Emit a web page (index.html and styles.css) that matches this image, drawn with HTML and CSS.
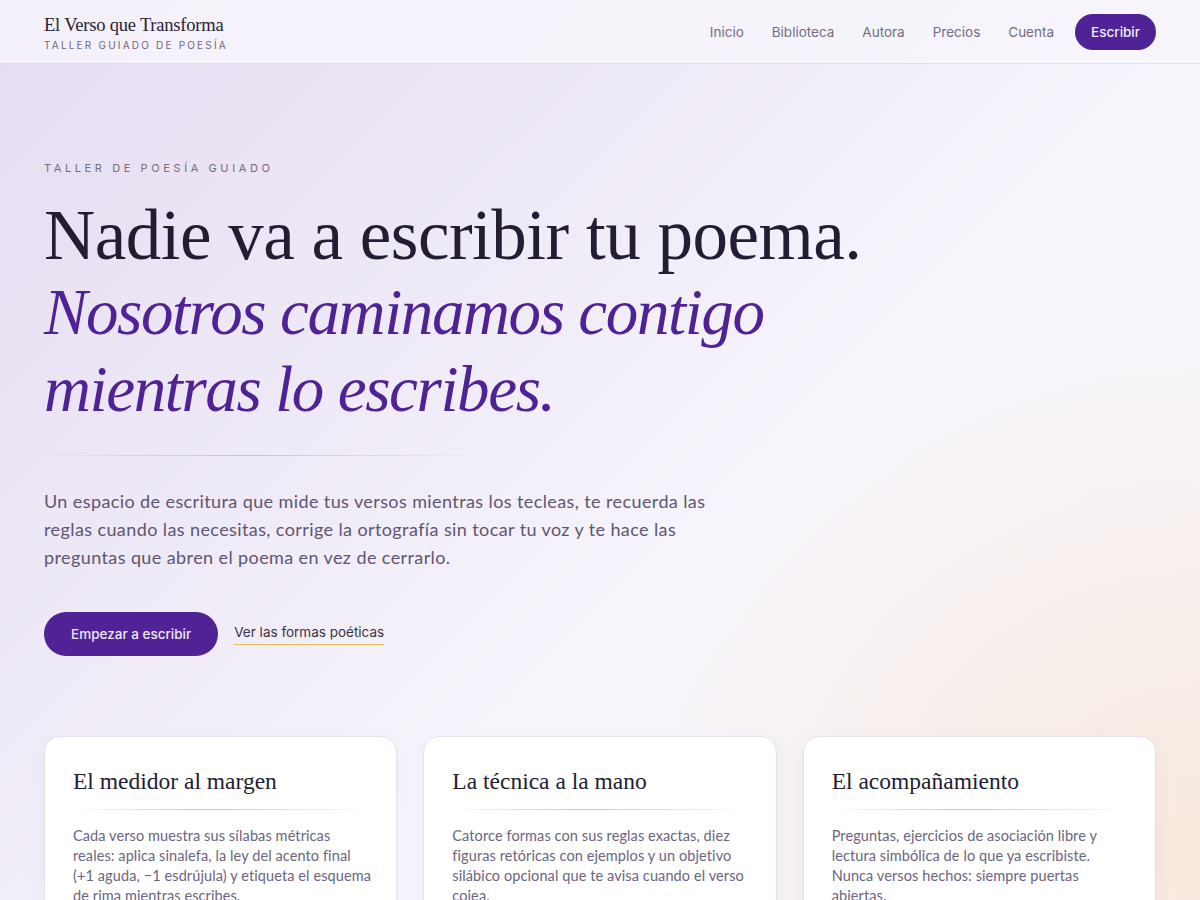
FILE: index.html
```html
<!DOCTYPE html>
<html lang="es">
<head>
<meta charset="utf-8">
<title>El Verso que Transforma</title>
<link rel="stylesheet" href="styles.css">
</head>
<body>
<header class="topbar">
  <div class="brand">
    <div class="brand-name">El Verso que Transforma</div>
    <div class="brand-sub">TALLER GUIADO DE POESÍA</div>
  </div>
  <nav class="nav">
    <a href="#">Inicio</a>
    <a href="#">Biblioteca</a>
    <a href="#">Autora</a>
    <a href="#">Precios</a>
    <a href="#">Cuenta</a>
    <a href="#" class="nav-cta">Escribir</a>
  </nav>
</header>
<main class="hero">
  <div class="eyebrow">TALLER DE POESÍA GUIADO</div>
  <h1 class="title">Nadie va a escribir tu poema.<br><em>Nosotros caminamos contigo<br>mientras lo escribes.</em></h1>
  <div class="rule"></div>
  <p class="lead">Un espacio de escritura que mide tus versos mientras los tecleas, te recuerda las reglas cuando las necesitas, corrige la ortografía sin tocar tu voz y te hace las preguntas que abren el poema en vez de cerrarlo.</p>
  <div class="actions">
    <a href="#" class="btn">Empezar a escribir</a>
    <a href="#" class="link">Ver las formas poéticas</a>
  </div>
  <section class="cards">
    <article class="card">
      <h2>El medidor al margen</h2>
      <div class="card-rule"></div>
      <p>Cada verso muestra sus sílabas métricas reales: aplica sinalefa, la ley del acento final (+1 aguda, −1 esdrújula) y etiqueta el esquema de rima mientras escribes.</p>
    </article>
    <article class="card">
      <h2>La técnica a la mano</h2>
      <div class="card-rule"></div>
      <p>Catorce formas con sus reglas exactas, diez figuras retóricas con ejemplos y un objetivo silábico opcional que te avisa cuando el verso cojea.</p>
    </article>
    <article class="card">
      <h2>El acompañamiento</h2>
      <div class="card-rule"></div>
      <p>Preguntas, ejercicios de asociación libre y lectura simbólica de lo que ya escribiste. Nunca versos hechos: siempre puertas abiertas.</p>
    </article>
  </section>
</main>
</body>
</html>
```
FILE: styles.css
```css
* { box-sizing: border-box; }
html, body { margin: 0; padding: 0; }
body {
  width: 1200px;
  height: 900px;
  overflow: hidden;
  font-family: "Lato", "DejaVu Sans", sans-serif;
  color: #2a2238;
  background:
    radial-gradient(ellipse 800px 700px at 1200px 850px, rgba(248, 232, 220, 0.95), rgba(248, 232, 220, 0) 72%),
    linear-gradient(135deg, #e5dcf1 0%, #efeaf7 35%, #f7f5fc 60%, #f8f5f8 100%);
}
a { text-decoration: none; color: inherit; }

.topbar {
  height: 64px;
  display: flex;
  align-items: center;
  justify-content: space-between;
  padding: 0 44px;
  background: rgba(247, 245, 252, 0.85);
  border-bottom: 1px solid #e4e0ec;
}
.brand { display: flex; flex-direction: column; padding-top: 2px; }
.brand-name {
  font-family: "Liberation Serif", serif;
  font-size: 18.5px;
  line-height: 22px;
  letter-spacing: -0.2px;
  color: #2a2238;
}
.brand-sub {
  font-family: "Inter", sans-serif;
  font-size: 10px;
  letter-spacing: 2.2px;
  color: #6e6880;
  margin-top: 3px;
}
.nav { display: flex; align-items: center; gap: 28px; }
.nav a {
  font-family: "Inter", sans-serif;
  font-size: 13.5px;
  color: #736c84;
}
.nav a.nav-cta {
  background: #4f2396;
  color: #f1ecfa;
  font-weight: 500;
  padding: 0 16px;
  height: 36px;
  line-height: 36px;
  border-radius: 18px;
  margin-left: -7px;
}

.hero { padding: 96px 44px 0; }
.eyebrow {
  font-family: "Inter", sans-serif;
  font-size: 11px;
  letter-spacing: 3.6px;
  color: #736c83;
  line-height: 16px;
}
.title {
  margin: 22px 0 0;
  font-family: "Liberation Serif", serif;
  font-weight: 400;
  font-size: 71px;
  line-height: 75px;
  color: #241c33;
  letter-spacing: -0.5px;
}
.title em {
  color: #4f2396;
  font-style: italic;
  font-size: 65px;
  letter-spacing: -1.4px;
}
.rule {
  margin-top: 28px;
  width: 440px;
  height: 1px;
  background: linear-gradient(90deg, rgba(232, 197, 110, 0), #e9c46a 45%, rgba(232, 197, 110, 0));
}
.lead {
  margin: 31px 0 0;
  width: 680px;
  font-family: "Lato", sans-serif;
  font-size: 18px;
  line-height: 28px;
  letter-spacing: 0.4px;
  color: #5e5670;
}
.actions {
  margin-top: 41px;
  display: flex;
  align-items: center;
  gap: 16px;
}
.btn {
  height: 44px;
  line-height: 44px;
  padding: 0 27px;
  border-radius: 22px;
  background: #4f2396;
  color: #efe9fa;
  font-family: "Inter", sans-serif;
  font-size: 13.5px;
  font-weight: 500;
}
.link {
  font-family: "Inter", sans-serif;
  font-size: 13.5px;
  color: #3a3248;
  padding-bottom: 4px;
  border-bottom: 1px solid #e7bf5a;
}
.cards {
  margin-top: 80px;
  display: grid;
  grid-template-columns: repeat(3, 1fr);
  gap: 26px;
}
.card {
  background: #ffffff;
  border: 1px solid #e6e1ec;
  border-radius: 16px;
  padding: 28px 22px 28px 28px;
  height: 220px;
  box-shadow: 0 6px 20px rgba(80, 50, 120, 0.05);
}
.card h2 {
  margin: 0;
  font-family: "Liberation Serif", serif;
  font-weight: 400;
  font-size: 23.5px;
  line-height: 32px;
  color: #241c33;
}
.card-rule {
  margin-top: 12px;
  margin-right: 6px;
  height: 1px;
  background: linear-gradient(90deg, rgba(232, 197, 110, 0), #e9c46a 45%, rgba(232, 197, 110, 0));
}
.card p {
  margin: 16px 0 0;
  font-family: "Lato", sans-serif;
  font-size: 14.5px;
  line-height: 20px;
  letter-spacing: 0.1px;
  color: #6b6480;
}
```
